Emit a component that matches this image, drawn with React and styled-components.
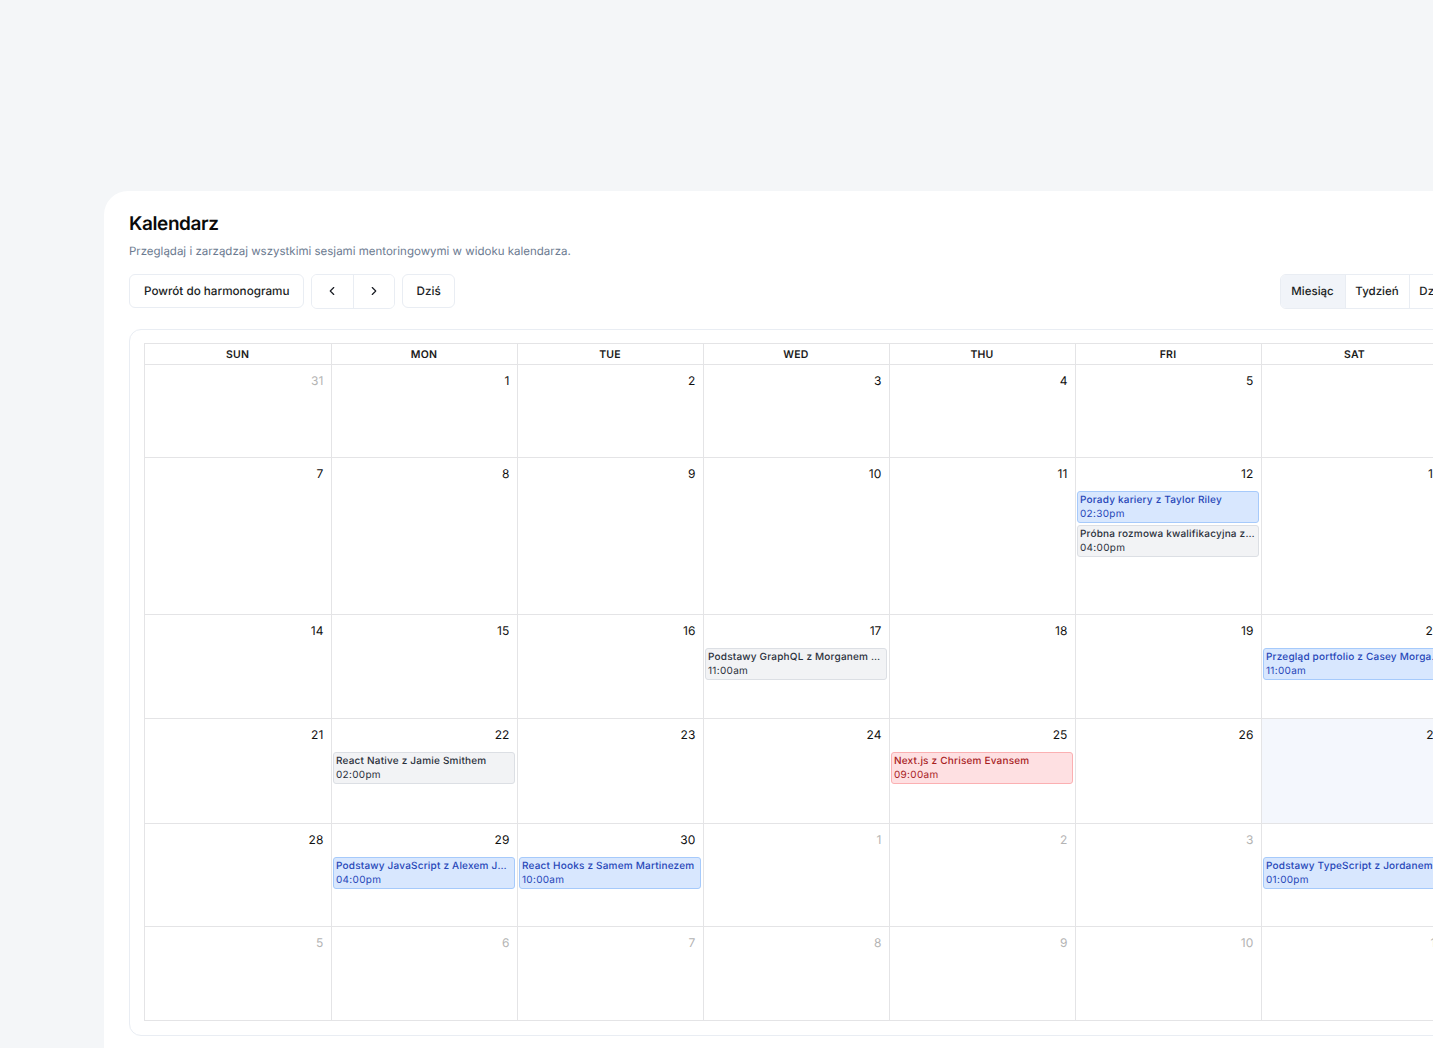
import React from 'react';
import styled, { createGlobalStyle } from 'styled-components';
import { ChevronLeft, ChevronRight } from 'lucide-react';

const Global = createGlobalStyle`
  html, body { margin: 0; padding: 0; height: 1048px; overflow: hidden; background: #f4f6f8; }
  body { font-family: Inter, "Liberation Sans", sans-serif; -webkit-font-smoothing: antialiased; text-rendering: geometricPrecision; }
  * { box-sizing: border-box; }
`;
const Page = styled.div`
  width: 1433px; height: 1048px; overflow: hidden; padding: 191px 0 0 104px; display: flex; align-items: flex-start;
`;
const Panel = styled.main`
  flex: none; width: 1383px; height: 870px; background: #fff; border-radius: 24px 24px 0 0; padding: 20.5px 25px 25px;
`;
const Title = styled.h1`
  margin: 0; font-size: 19px; line-height: 24px; font-weight: 600; letter-spacing: -0.4px; color: #0a0a0a;
`;
const Subtitle = styled.p`
  margin: 7.5px 0 0; font-size: 11.5px; line-height: 16px; color: #6b7a90;
`;
const Toolbar = styled.div`
  display: flex; justify-content: space-between; align-items: center; margin-top: 15px; height: 34px;
`;
const Cluster = styled.div`
  display: flex; gap: 7px; align-items: center;
`;
const Button = styled.button`
  height: 34px; padding: 0 ${p => p.$pad || 14}px 1px; background: #fff; border: 1px solid #e9edf3; border-radius: 6px;
  font: 500 11.7px Inter, sans-serif; text-rendering: geometricPrecision; color: #1a1d24;
`;
const Segmented = styled.div`
  display: flex; height: 35px; border: 1px solid #e9edf3; border-radius: 6px; overflow: hidden; background: #fff;
`;
const Segment = styled.button`
  width: ${p => p.$w}px; height: 100%; padding: 0 1px 1px 0; border: 0; display: flex; align-items: center; justify-content: center;
  background: ${p => p.$active ? '#f1f4f9' : '#fff'};
  border-left: ${p => p.$first ? '0' : '1px solid #e9edf3'};
  font: 500 11.5px Inter, sans-serif; text-rendering: geometricPrecision; color: #1a1d24;
`;
const Card = styled.section`
  margin-top: 21px; padding: 13px 14px 14px; border: 1px solid #e9edf3; border-radius: 12px; background: #fff;
`;
const Grid = styled.div`
  display: grid; grid-template-columns: 187px repeat(5, 186px) 187px; grid-template-rows: 21px 93px 157px 104px 105px 103px 94px;
  width: 1305px; border-top: 1px solid #e4e4e6; border-left: 1px solid #e4e4e6;
`;
const Head = styled.div`
  display: flex; align-items: center; justify-content: center; padding-right: 1px; border-right: 1px solid #e4e4e6; border-bottom: 1px solid #e4e4e6;
  font-size: 10.5px; font-weight: 600; letter-spacing: 0.2px; color: #1a1a1a;
`;
const Cell = styled.div`
  min-width: 0; border-right: 1px solid #e4e4e6; border-bottom: 1px solid #e4e4e6;
  background: ${p => p.$today ? '#f4f7fd' : '#fff'}; display: flex; flex-direction: column;
`;
const DayNum = styled.div`
  flex: none; text-align: right; padding: 7.5px 7.5px 0 0; height: 31px; font-size: 12px; line-height: 15px; letter-spacing: 0.1px;
  color: ${p => p.$muted ? '#b4b4b4' : '#111'};
`;
const tones = {
  blue: { bg: '#d8e7fe', bd: '#a6cafb', fg: '#2646b8' },
  gray: { bg: '#f2f3f5', bd: '#dcdfe4', fg: '#2a303b' },
  red: { bg: '#fee0e2', bd: '#fbb0b2', fg: '#a8221f' },
};
const Event = styled.div`
  flex: none; margin: 1.5px 2px 0 1px; height: 32.5px; padding: 1.5px 2px 0; border-radius: 3px; border: 1px solid ${p => tones[p.$tone].bd};
  background: ${p => tones[p.$tone].bg}; color: ${p => tones[p.$tone].fg}; font-size: 10px; line-height: 14px;
  overflow: hidden;
`;
const EventTitle = styled.div`
  font-weight: 500; letter-spacing: 0.2px; white-space: nowrap; overflow: hidden; text-overflow: ellipsis;
`;
const EventTime = styled.div`
  font-weight: 400; letter-spacing: 0.3px; white-space: nowrap;
`;

const days = ['SUN','MON','TUE','WED','THU','FRI','SAT'];
const cells = [
  [31,1],[1],[2],[3],[4],[5],[6],
  [7],[8],[9],[10],[11],[12],[13],
  [14],[15],[16],[17],[18],[19],[20],
  [21],[22],[23],[24],[25],[26],[27],
  [28],[29],[30],[1,1],[2,1],[3,1],[4,1],
  [5,1],[6,1],[7,1],[8,1],[9,1],[10,1],[11,1],
];
const byIndex = {
  12: [['blue','Porady kariery z Taylor Riley','02:30pm'],['gray','Próbna rozmowa kwalifikacyjna z Rileyem Parkerem','04:00pm']],
  17: [['gray','Podstawy GraphQL z Morganem Lee','11:00am']],
  20: [['blue','Przegląd portfolio z Casey Morganem','11:00am']],
  22: [['gray','React Native z Jamie Smithem','02:00pm']],
  25: [['red','Next.js z Chrisem Evansem','09:00am']],
  29: [['blue','Podstawy JavaScript z Alexem Johnsonem','04:00pm']],
  30: [['blue','React Hooks z Samem Martinezem','10:00am']],
  34: [['blue','Podstawy TypeScript z Jordanem Lee','01:00pm']],
};

export default function App() {
  return (
    <Page>
      <Global />
      <Panel>
        <Title>Kalendarz</Title>
        <Subtitle>Przeglądaj i zarządzaj wszystkimi sesjami mentoringowymi w widoku kalendarza.</Subtitle>
        <Toolbar>
          <Cluster>
            <Button>Powrót do harmonogramu</Button>
            <Segmented>
              <Segment $w={41} $first><ChevronLeft size={14} strokeWidth={2} /></Segment>
              <Segment $w={41}><ChevronRight size={14} strokeWidth={2} /></Segment>
            </Segmented>
            <Button $pad={13}>Dziś</Button>
          </Cluster>
          <Segmented>
            <Segment $w={64} $first $active>Miesiąc</Segment>
            <Segment $w={64}>Tydzień</Segment>
            <Segment $w={52}>Dzień</Segment>
          </Segmented>
        </Toolbar>
        <Card>
          <Grid>
            {days.map(d => <Head key={d}>{d}</Head>)}
            {cells.map(([n, muted], i) => (
              <Cell key={i} $today={i === 27}>
                <DayNum $muted={muted}>{n}</DayNum>
                {(byIndex[i] || []).map(([tone, title, time]) => (
                  <Event key={title} $tone={tone}>
                    <EventTitle>{title}</EventTitle>
                    <EventTime>{time}</EventTime>
                  </Event>
                ))}
              </Cell>
            ))}
          </Grid>
        </Card>
      </Panel>
    </Page>
  );
}
